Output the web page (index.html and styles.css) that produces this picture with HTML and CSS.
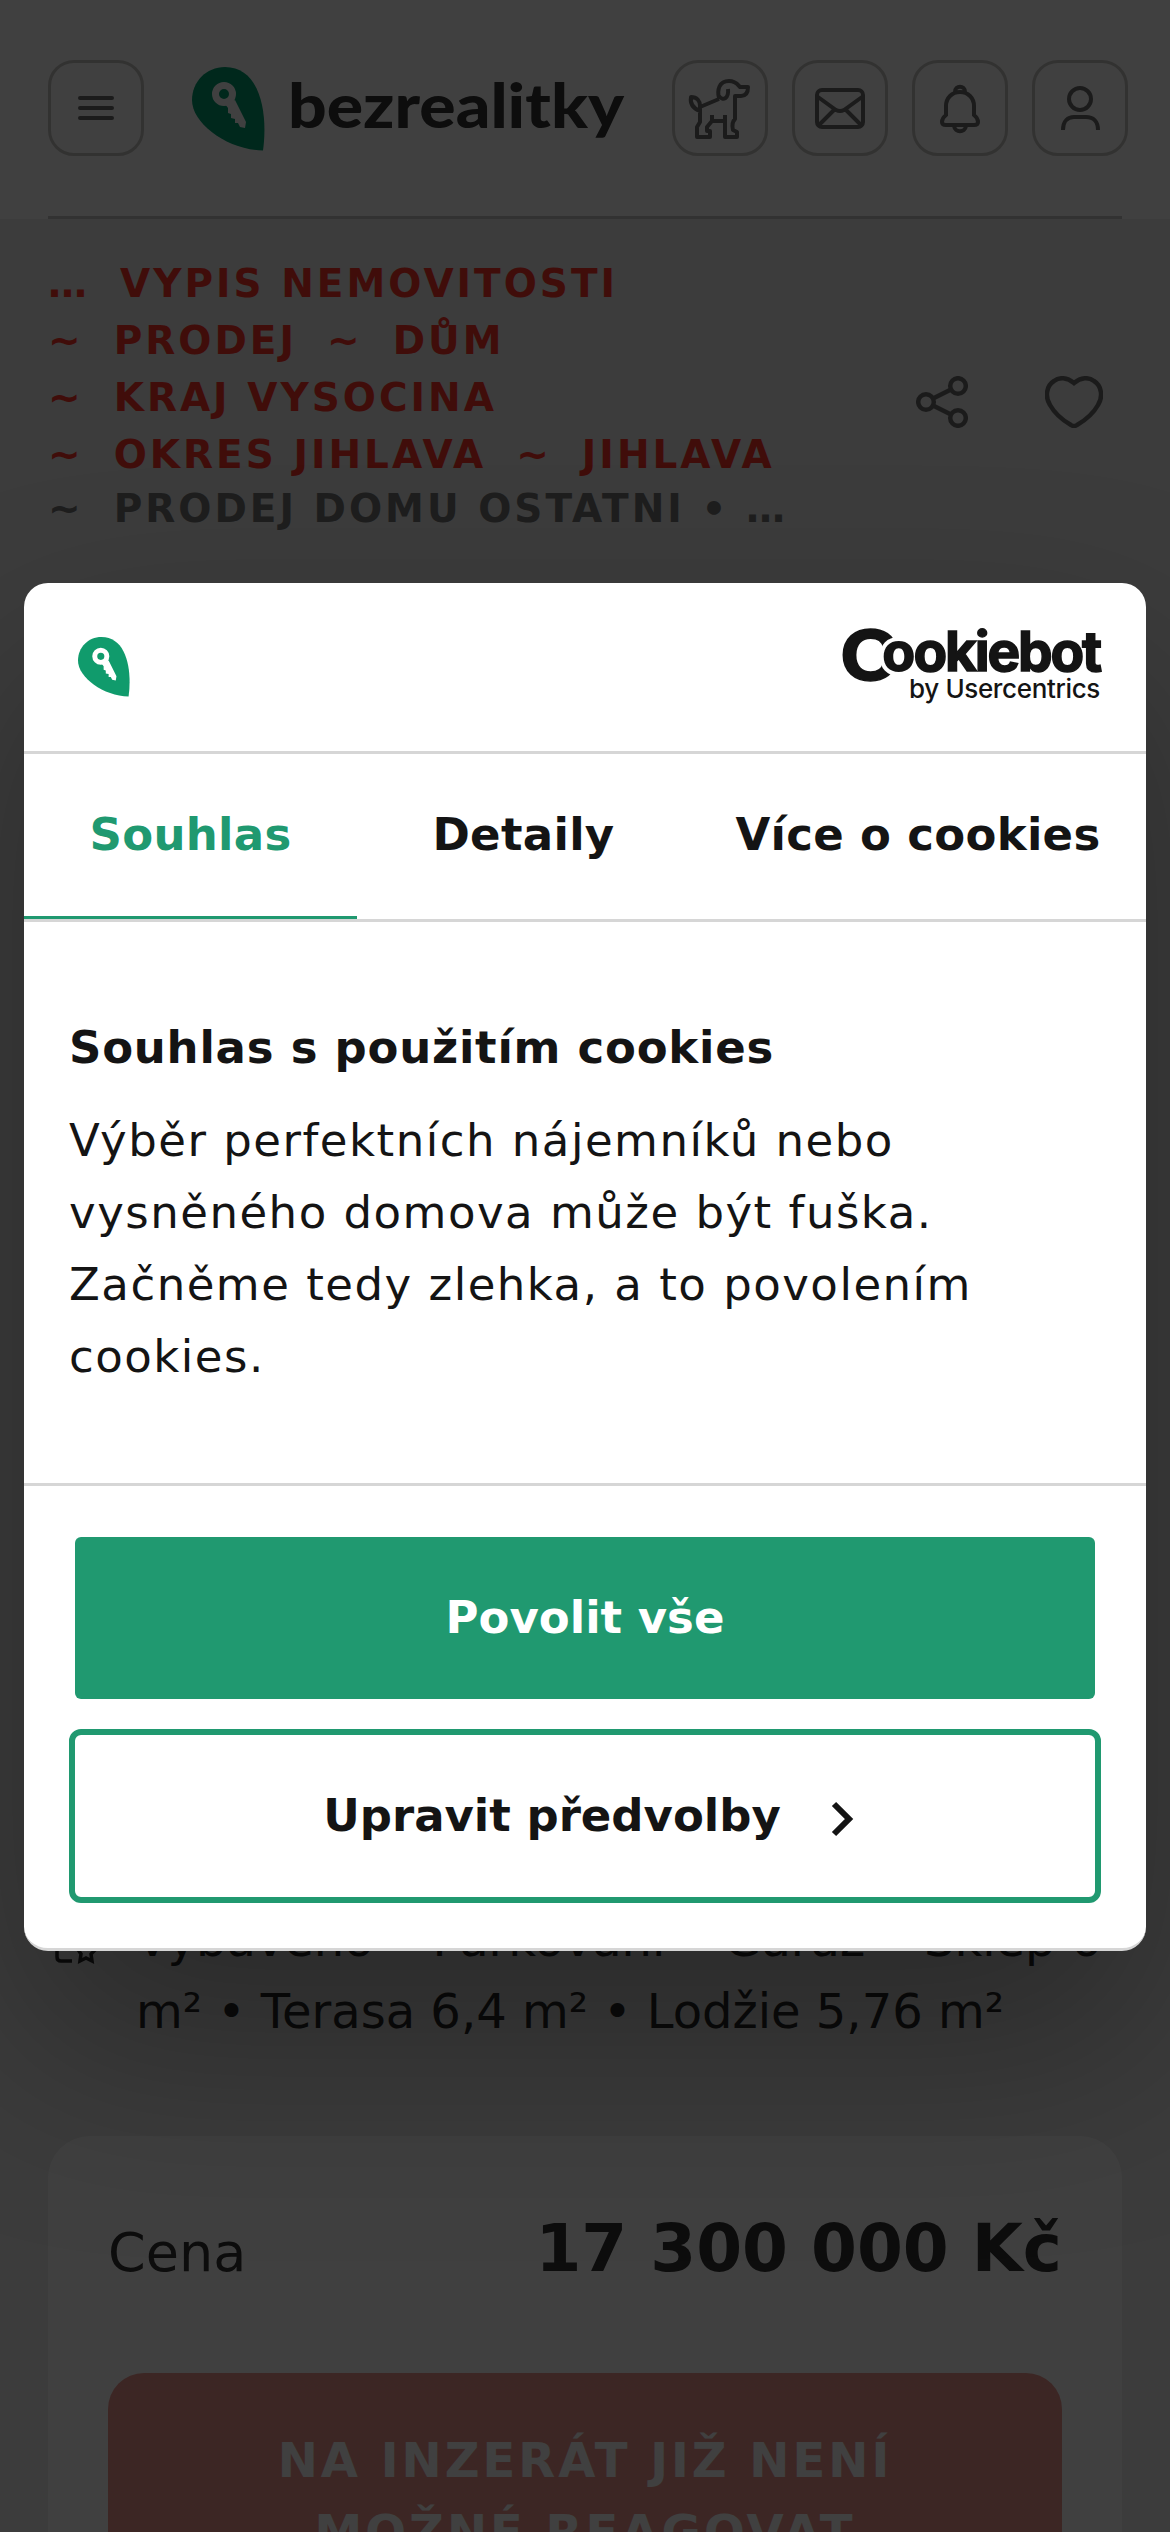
FILE: index.html
```html
<!DOCTYPE html>
<html lang="cs">
<head>
<meta charset="utf-8">
<title>bezrealitky</title>
<link rel="stylesheet" href="styles.css">
</head>
<body>
<svg width="0" height="0" class="defs">
  <symbol id="leaf" viewBox="0 0 73 84">
    <path fill="currentColor" d="M33 0C14 0 0 15 0 33C0 57 36 83 71 83.500C76 48 69 0 33 0Z"/>
    <g class="key"><circle cx="32" cy="27" r="8.500" stroke-width="7" fill="none"/><path stroke="none" fill="#fff" d="M33 37L43 33L54 55L53 61L48 60L46 56L43 56L43 52L39 51L39 47L36 46L36 41Z"/></g>
  </symbol>
</svg>
<div class="page">
  <header class="header">
    <button class="icon-btn"><svg width="36" height="26" viewBox="0 0 36 26" stroke-width="4" stroke-linecap="round"><path d="M2 3H34M2 13H34M2 23H34"/></svg></button>
    <a class="brand">
      <svg class="leaf" width="73" height="84"><use href="#leaf"/></svg>
      <svg width="340" height="84"><text class="brand-name" x="-1" y="61" textLength="336" lengthAdjust="spacingAndGlyphs">bezrealitky</text></svg>
    </a>
    <nav class="actions">
      <button class="icon-btn"><svg width="96" height="96" viewBox="0 0 96 96" stroke-width="4" stroke-linejoin="round"><path d="M28 47L47 39M47 38C45 30 47 21 57 21C64 21 66 25 68 27H76C76 32 74 36 69 36H63V59C60 62 60 66 61 70L65 72V77H53V55M53 61H40L35 67V71H38V77H25V67L28 62V46M40 55V61M47 36C51 42 57 38 56 29M28 51C20 48 18 43 19 37C25 37 28 41 28 46"/></svg></button>
      <button class="icon-btn"><svg width="96" height="96" viewBox="0 0 96 96" stroke-width="4"><rect x="25" y="30" width="46" height="37" rx="5"/><path d="M26 37L44 50Q48 52 52 50L70 37M27 65L42 50M69 65L54 50"/></svg></button>
      <button class="icon-btn"><svg width="96" height="96" viewBox="0 0 96 96" stroke-width="4"><path d="M48 32C40 32 34 38 34 46V55Q30 58 30 62Q30 65 34 65H62Q66 65 66 62Q66 58 62 55V46C62 38 56 32 48 32ZM43 32C43 25 53 25 53 32M42 66C43 73 53 73 54 66"/></svg></button>
      <button class="icon-btn"><svg width="96" height="96" viewBox="0 0 96 96" stroke-width="4"><circle cx="48" cy="39" r="11"/><path d="M31 70C31 61 36 57 42 57H54C61 57 66 61 66 70"/></svg></button>
    </nav>
  </header>
  <section class="crumb-bar">
    <div class="crumbs">
      <div class="crumb-line"><span>…</span><a>VYPIS NEMOVITOSTI</a></div>
      <div class="crumb-line"><span>~</span><a>PRODEJ</a><span>~</span><a>DŮM</a></div>
      <div class="crumb-line"><span>~</span><a>KRAJ VYSOCINA</a></div>
      <div class="crumb-line"><span>~</span><a>OKRES JIHLAVA</a><span>~</span><a>JIHLAVA</a></div>
      <div class="crumb-line current"><span>~</span><span>PRODEJ DOMU OSTATNI • …</span></div>
    </div>
    <div class="tools">
      <svg width="52" height="52" viewBox="0 0 52 52" stroke-width="4.500"><circle cx="10" cy="26" r="7.800"/><circle cx="42" cy="10" r="7.800"/><circle cx="42" cy="42" r="7.800"/><path d="M17 22.500L35 13.500M17 29.500L35 38.500"/></svg>
      <svg width="58" height="52" viewBox="0 0 58 52" stroke-width="4.500"><path d="M29 7C36 1 44 1 49 5C57 10 58 21 53 29C48 38 39 45 32 49Q29 51 26 49C19 45 10 38 5 29C0 21 1 10 9 5C14 1 22 1 29 7Z"/></svg>
    </div>
  </section>
  <section class="equipment">
    <svg width="44" height="44" viewBox="0 0 44 44" stroke-width="3.500"><path d="M18 38H7Q3 38 3 34V4H20M28 24L25 28L27 31L26 38L32 35L38 38L37 31L40 28L36 24Z"/></svg>
    <p>Vybaveno • Parkování • Garáž • Sklep 6 m² • Terasa 6,4 m² • Lodžie 5,76 m²</p>
  </section>
  <section class="card">
    <div class="price-row"><span>Cena</span><strong>17 300 000 Kč</strong></div>
    <button class="closed">NA INZERÁT JIŽ NENÍ MOŽNÉ REAGOVAT</button>
  </section>
</div>
<div class="overlay"></div>
<div class="dialog">
  <div class="dialog-head">
    <svg class="leaf small" width="52" height="60"><use href="#leaf"/></svg>
    <div class="cookiebot">
      <div class="wordmark"><span class="big-c">C</span><span class="cut">o</span><span class="rest">okiebot</span></div>
      <div class="byline">by Usercentrics</div>
    </div>
  </div>
  <div class="tabs"><a class="tab active">Souhlas</a><a class="tab">Detaily</a><a class="tab wide">Více o cookies</a></div>
  <div class="dialog-body">
    <h2>Souhlas s použitím cookies</h2>
    <p>Výběr perfektních nájemníků nebo vysněného domova může být fuška. Začněme tedy zlehka, a to povolením cookies.</p>
  </div>
  <div class="dialog-foot">
    <button class="btn primary">Povolit vše</button>
    <button class="btn edit">Upravit předvolby<svg width="24" height="36" viewBox="0 0 24 36" fill="none" stroke="#141414" stroke-width="6"><path d="M3 3L18 18L3 33"/></svg></button>
  </div>
</div>
</body>
</html>
```
FILE: styles.css
```css
* { box-sizing: border-box; }
body { margin: 0; height: 2532px; overflow: hidden; position: relative; background: #ededed; font-family: "DejaVu Sans", sans-serif; color: #343434; }
button { font: inherit; color: inherit; padding: 0; margin: 0; background: none; border: 0; }
svg { display: block; flex: none; }
.defs { position: absolute; }
.page { height: 2532px; overflow: hidden; display: flex; flex-direction: column; }
.page svg { fill: none; stroke: #6c6c6c; }

.header { height: 219px; flex: none; padding: 60px 42px 0 48px; display: flex; align-items: flex-start; background: linear-gradient(#c8c8c8, #c8c8c8) 48px 216px / 1074px 3px no-repeat, #fff; }
.icon-btn { width: 96px; height: 96px; border: 3px solid #c8c6c3; border-radius: 26px; display: flex; align-items: center; justify-content: center; flex: none; }
.brand { display: flex; margin: 7px 0 0 48px; gap: 24px; }
.page .leaf { color: #00a070; stroke: none; }
.leaf { color: #109b6c; }
.leaf .key, .key { stroke: #fff; }
.page .brand-name { font: 900 61px Lato, sans-serif; fill: #343434; stroke: none; }
.page .brand svg { overflow: visible; }
.actions { display: flex; gap: 24px; margin-left: auto; }

.crumb-bar { height: 364px; flex: none; padding: 36px 67px 0 48px; display: flex; justify-content: space-between; }
.crumb-line { display: flex; gap: 30px; font-size: 39px; font-weight: 700; letter-spacing: 3px; line-height: 57px; color: #ff362b; white-space: nowrap; }
.crumb-line.current { color: #777; line-height: 51px; }
.tools { display: flex; gap: 77px; padding-top: 121px; }

.equipment { margin-top: 1320px; flex: none; padding: 0 48px 0 54px; display: flex; gap: 38px; font-size: 48px; line-height: 72px; color: #282828; }
.equipment svg { margin-top: 20px; stroke: #282828; }
.equipment p { margin: 0; }

.card { margin: 89px 48px 0; height: 500px; flex: none; background: #fff; border-radius: 42px; padding: 60px; }
.price-row { display: flex; justify-content: space-between; align-items: baseline; font-size: 54px; line-height: 106px; height: 177px; }
.price-row strong { font-size: 66px; }
.closed { width: 954px; height: 240px; border-radius: 36px; background: #ee9890; color: #fff; font-size: 48px; font-weight: 700; line-height: 72px; letter-spacing: 3px; padding: 6px 150px 0; }

.overlay { position: absolute; inset: 0; background: rgba(0,0,0,.75); }

.dialog { position: absolute; left: 24px; top: 583px; width: 1122px; height: 1368px; background: #fff; border-bottom: 3px solid #d6d6d6; border-radius: 24px; box-shadow: 0 96px 204px rgba(0,0,0,.3); color: #141414; display: flex; flex-direction: column; }
.dialog-head { height: 171px; flex: none; border-bottom: 3px solid #d6d6d6; display: flex; justify-content: space-between; align-items: flex-start; padding: 36px 46px 0 54px; }
.small { margin-top: 18px; }
.cookiebot { font-family: Inter, sans-serif; text-align: right; white-space: nowrap; }
.wordmark { font-size: 55px; font-weight: 700; line-height: 64px; height: 55px; letter-spacing: -2.2px; -webkit-text-stroke: 1.5px #141414; }
.big-c { font-size: 69px; line-height: 1px; display: inline-block; vertical-align: -9px; letter-spacing: 0; margin-right: -17px; transform: scaleX(1.16); transform-origin: right; }
.cut, .rest { position: relative; }
.cut { font-weight: 800; -webkit-text-stroke: 8px #fff; paint-order: stroke fill; }
.byline { position: relative; font-size: 26px; font-weight: 500; line-height: 30px; letter-spacing: -.35px; }
.tabs { height: 168px; flex: none; display: flex; border-bottom: 3px solid #d6d6d6; font-size: 45px; font-weight: 700; letter-spacing: .3px; }
.tab { width: 333px; height: 165px; line-height: 162px; text-align: center; border-bottom: 3px solid transparent; }
.tab.wide { width: 456px; }
.tab.active { color: #209970; border-color: #209970; }
.dialog-body { height: 564px; flex: none; border-bottom: 3px solid #d6d6d6; padding: 90px 45px 0; font-size: 45px; line-height: 72px; letter-spacing: 1.5px; }
.dialog-body h2 { margin: 0 0 21px; font-size: 45px; letter-spacing: .75px; }
.dialog-body p { margin: 0; }
.dialog-foot { padding: 45px; display: flex; flex-direction: column; gap: 24px; }
.btn { height: 174px; flex: none; border: 6px solid #209970; border-radius: 12px; font-size: 45px; font-weight: 700; display: flex; align-items: center; justify-content: center; gap: 50px; padding-bottom: 2px; }
.btn.primary { background: #209970; background-clip: padding-box; border-color: transparent; color: #fff; }
.btn.edit { padding-left: 8px; }
.btn svg { margin-top: 7px; }
```
